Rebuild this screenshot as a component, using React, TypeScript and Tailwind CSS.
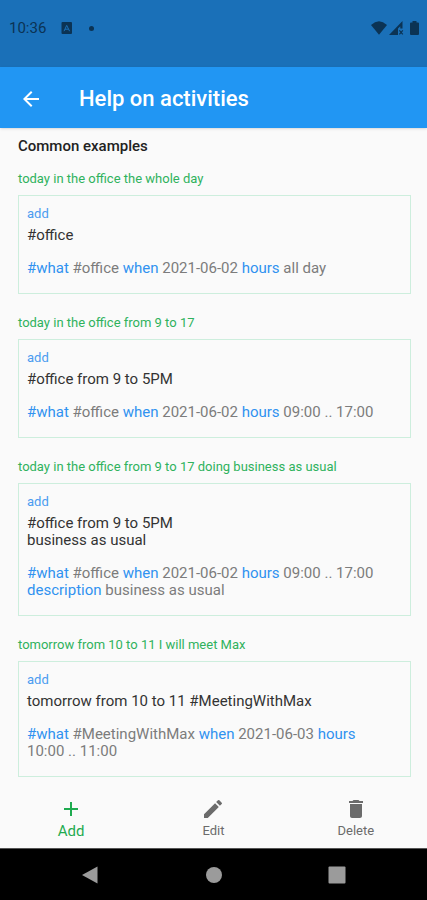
import React from 'react';
import { MdAdd, MdArrowBack, MdDelete, MdEdit } from 'react-icons/md';

interface Detail {
  key: string;
  value: string;
  newLine?: boolean;
}

interface Example {
  title: string;
  input: string[];
  details: Detail[];
}

const examples: Example[] = [
  {
    title: 'today in the office the whole day',
    input: ['#office'],
    details: [
      { key: '#what', value: '#office' },
      { key: 'when', value: '2021-06-02' },
      { key: 'hours', value: 'all day' },
    ],
  },
  {
    title: 'today in the office from 9 to 17',
    input: ['#office from 9 to 5PM'],
    details: [
      { key: '#what', value: '#office' },
      { key: 'when', value: '2021-06-02' },
      { key: 'hours', value: '09:00 .. 17:00' },
    ],
  },
  {
    title: 'today in the office from 9 to 17 doing business as usual',
    input: ['#office from 9 to 5PM', 'business as usual'],
    details: [
      { key: '#what', value: '#office' },
      { key: 'when', value: '2021-06-02' },
      { key: 'hours', value: '09:00 .. 17:00' },
      { key: 'description', value: 'business as usual', newLine: true },
    ],
  },
  {
    title: 'tomorrow from 10 to 11 I will meet Max',
    input: ['tomorrow from 10 to 11 #MeetingWithMax'],
    details: [
      { key: '#what', value: '#MeetingWithMax' },
      { key: 'when', value: '2021-06-03' },
      { key: 'hours', value: '10:00 .. 11:00' },
    ],
  },
];

const StatusBar: React.FC = () => (
  <div className="flex h-[67px] items-start justify-between bg-[#1a70b8] pr-2 pl-[9px] pt-[18px] text-[#0b3354]">
    <div className="flex h-5 items-center">
      <span className="text-[15px] leading-5">10:36</span>
      <svg className="ml-[15px]" width="12" height="12" viewBox="0 0 12 12">
        <rect x="0.5" width="10.5" height="12" rx="1" fill="currentColor" />
        <path
          d="M3 9.2 5.7 3.4 8.6 9.2M4 7.2h3.6"
          fill="none"
          stroke="#1a70b8"
          strokeWidth="1"
        />
      </svg>
      <span className="ml-4 size-[5px] rounded-full bg-[#0b3354]"></span>
    </div>
    <div className="flex h-5 items-center">
      <svg width="16" height="14" viewBox="0 0 16 14" fill="currentColor">
        <path d="M8 13.8 0 4Q8-3.4 16 4Z" />
      </svg>
      <svg
        className="ml-[2px]"
        width="15"
        height="14"
        viewBox="0 0 15 14"
        fill="currentColor"
      >
        <path d="M0 14 13.5 0v7.6h-2.2V5.2L9 7.6V14Z" />
        <path
          d="m10.4 9.4 3.4 4M13.8 9.4l-3.4 4"
          stroke="currentColor"
          strokeWidth="1.2"
        />
      </svg>
      <svg
        className="ml-[6px]"
        width="9"
        height="14"
        viewBox="0 0 9 14"
        fill="currentColor"
      >
        <path d="M2.5 1.4V0h4v1.4H8a1 1 0 0 1 1 1V13a1 1 0 0 1-1 1H1a1 1 0 0 1-1-1V2.4a1 1 0 0 1 1-1Z" />
      </svg>
    </div>
  </div>
);

const ExampleCard: React.FC<Example> = ({ title, input, details }) => (
  <section className="mb-[19px]">
    <h3 className="mb-[6px] text-[13px] leading-5 text-[#2fb25d]">{title}</h3>
    <div className="border border-[#cdeedd] px-2 pt-[9px] pb-4 text-[15px] leading-[17px]">
      <p className="mb-[5px] text-[13px] leading-[17px] text-[#4a9cf0]">add</p>
      {input.map((line) => (
        <p key={line} className="text-[#333333]">
          {line}
        </p>
      ))}
      <p className="mt-4 text-[#7c7c7c]">
        {details.map(({ key, value, newLine }) => (
          <React.Fragment key={key}>
            {newLine && <br />}
            <span className="text-[#3092f0]">{key}</span>{' '}
            <span className="whitespace-nowrap">{value}</span>{' '}
          </React.Fragment>
        ))}
      </p>
    </div>
  </section>
);

const BottomNav: React.FC = () => (
  <nav className="grid h-[61px] grid-cols-3 bg-[#fafafa] pt-[10px] text-[#6b6b6b]">
    <button className="flex flex-col items-center text-[#1fab50]">
      <MdAdd size={24} />
      <span className="text-[15px] leading-5">Add</span>
    </button>
    <button className="flex flex-col items-center">
      <MdEdit size={24} />
      <span className="text-[13px] leading-5">Edit</span>
    </button>
    <button className="flex flex-col items-center">
      <MdDelete size={24} />
      <span className="text-[13px] leading-5">Delete</span>
    </button>
  </nav>
);

const SystemNav: React.FC = () => (
  <div className="flex h-[52px] items-center justify-center gap-[105px] border-t border-[#555555] bg-black text-[#9b9b9b]">
    <button aria-label="Back">
      <svg width="18" height="18" viewBox="0 0 18 18" fill="currentColor">
        <path d="M0 9 15.5 0.5v17Z" />
      </svg>
    </button>
    <button aria-label="Home">
      <svg width="18" height="18" viewBox="0 0 18 18" fill="currentColor">
        <circle cx="9" cy="9" r="8" />
      </svg>
    </button>
    <button aria-label="Recent apps">
      <svg width="18" height="18" viewBox="0 0 18 18" fill="currentColor">
        <rect x="0.5" y="0.5" width="17" height="17" rx="1" />
      </svg>
    </button>
  </div>
);

const App: React.FC = () => {
  return (
    <div className="flex min-h-screen flex-col bg-[#fafafa] font-[Roboto,sans-serif]">
      <StatusBar />
      <header className="flex h-[61px] items-center bg-[#2196f3] px-[19px] pt-[2px] text-white shadow-sm">
        <button aria-label="Go back">
          <MdArrowBack size={24} />
        </button>
        <h1 className="ml-9 text-[22px] leading-7 font-medium">
          Help on activities
        </h1>
      </header>
      <main className="flex-1 pt-2 pr-4 pl-[18px]">
        <h2 className="mb-[13px] text-[15px] leading-5 font-medium text-[#222222]">
          Common examples
        </h2>
        <div className="-mb-[9px]">
          {examples.map((example) => (
            <ExampleCard key={example.title} {...example} />
          ))}
        </div>
      </main>
      <BottomNav />
      <SystemNav />
    </div>
  );
};

export default App;
